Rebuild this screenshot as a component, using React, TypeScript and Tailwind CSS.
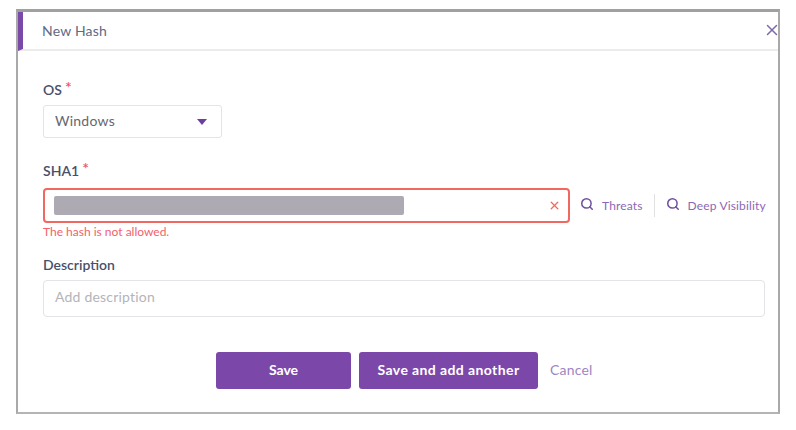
import { Search, X } from "lucide-react"

const font = { fontFamily: "Lato, 'Open Sans', sans-serif" }

function Label({ text, required }: { text: string; required?: boolean }) {
  return (
    <div className="flex items-start h-5 text-[14px] leading-5 font-semibold text-[#47506b]">
      <span>{text}</span>
      {required && <span className="ml-[3px] -mt-[3px] text-[16px] text-[#f0525f]">*</span>}
    </div>
  )
}

function SearchLink({ text }: { text: string }) {
  return (
    <div className="flex items-center gap-[8px] whitespace-nowrap text-[12px] tracking-[0.15px] text-[#8b68b4]">
      <Search size={14} strokeWidth={2.6} className="text-[#6f4f9f] -mt-[3px]" />
      <span>{text}</span>
    </div>
  )
}

export default function App() {
  return (
    <div className="w-[796px] h-[430px] bg-white pt-[9px] pl-[16px]" style={font}>
      <div className="w-[764px] h-[405px] bg-white border-x-2 border-b-2 border-t-[3px] border-x-[#a9a9a9] border-b-[#b4b4b4] border-t-[#a0a0a0]">
        <div className="flex items-center justify-between h-[39px] border-b-2 border-[#ececec] border-l-[5px] border-l-[#7b4aa8] pl-[19px]">
          <span className="-mt-px text-[14px] tracking-[0.2px] text-[#606a85]">New Hash</span>
          <X size={18} strokeWidth={2} className="text-[#7a6aa8] -mt-[2px] -mr-[3px]" />
        </div>

        <div className="pl-[25px] pr-[12px] pt-[29px]">
          <Label text="OS" required />
          <div className="flex items-center justify-between mt-[5px] w-[179px] h-[33px] border border-[#e3e3e8] rounded-[3px] pl-[11px] pr-[14px] pb-[2px] text-[14px] tracking-[0.25px] text-[#666670]">
            <span>Windows</span>
            <span className="mt-[2px] w-0 h-0 border-x-[5px] border-x-transparent border-t-[6px] border-t-[#6b3fa0]" />
          </div>

          <div className="mt-[23px]">
            <Label text="SHA1" required />
          </div>
          <div className="flex items-center mt-[7px]">
            <div className="flex shrink-0 items-center justify-between w-[527px] h-[35px] border-2 border-[#f0685f] rounded-[4px] pl-[9px] pr-[7px]">
              <div className="w-[350px] h-[19px] rounded-[2px] bg-[#aeaab4]" />
              <X size={13} strokeWidth={2.4} className="text-[#f0685f]" />
            </div>
            <div className="flex items-center ml-[10px]">
              <SearchLink text="Threats" />
              <div className="w-px h-[23px] bg-[#e0dfe2] mx-[11px]" />
              <SearchLink text="Deep Visibility" />
            </div>
          </div>
          <div className="h-[18px] text-[12px] leading-[18px] text-[#f2616b]">The hash is not allowed.</div>

          <div className="mt-[14px]">
            <Label text="Description" />
          </div>
          <div className="flex items-center mt-[5px] w-[722px] h-[37px] border border-[#e3e3e8] rounded-[4px] pl-[11px] pb-[4px] text-[14px] tracking-[0.2px] text-[#b4b4b8]">
            Add description
          </div>

          <div className="flex items-center mt-[35px] ml-[173px] text-[14px]">
            <button className="w-[135px] h-[37px] pb-[3px] rounded-[3px] bg-[#7b48aa] text-white font-bold">Save</button>
            <button className="w-[179px] h-[37px] ml-[8px] pb-[3px] rounded-[3px] bg-[#7b48aa] text-white font-bold tracking-[0.4px]">
              Save and add another
            </button>
            <span className="ml-[12px] pb-[3px] text-[#9e85c4] tracking-[0.2px]">Cancel</span>
          </div>
        </div>
      </div>
    </div>
  )
}
